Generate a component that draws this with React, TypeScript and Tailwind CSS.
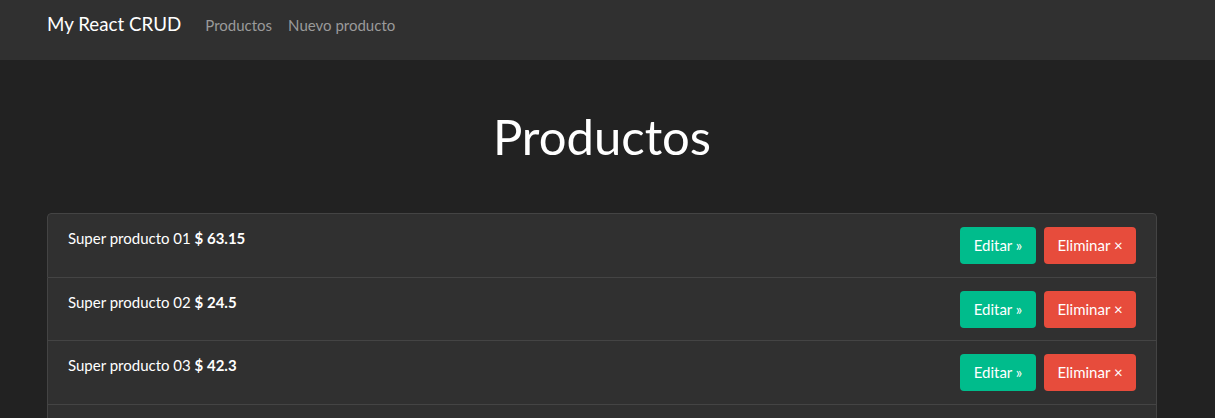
import React from "react";

const products = [
  { name: "Super producto 01", price: "63.15" },
  { name: "Super producto 02", price: "24.5" },
  { name: "Super producto 03", price: "42.3" },
  { name: "Super producto 04", price: "10" },
];

export default function App() {
  return (
    <div className="min-h-[418px] bg-[#222222] text-white font-['Lato','Open_Sans',sans-serif]">
      <nav className="h-[60px] bg-[#303030]">
        <div className="ml-[47px] flex items-baseline pt-[10px]">
          <span className="text-[18.75px] leading-[28px] text-white">My React CRUD</span>
          <a className="ml-[24px] text-[15px] leading-[22px] text-[#9a9a9a]">Productos</a>
          <a className="ml-[16px] text-[15px] leading-[22px] text-[#9a9a9a]">Nuevo producto</a>
        </div>
      </nav>
      <div className="ml-[47px] w-[1110px]">
        <h1 className="mt-[47px] text-center text-[49px] leading-[58px] font-normal text-white">Productos</h1>
        <ul className="mt-[48px] rounded-t-[4px] overflow-hidden">
          {products.map((p, i) => (
            <li
              key={i}
              className={`flex items-start justify-between bg-[#303030] border-x border-b border-[#444444] px-[20px] pt-[13px] pb-[12.5px] ${
                i === 0 ? "border-t rounded-t-[4px]" : ""
              }`}
            >
              <span className="text-[15px] leading-[22px] text-white">
                {p.name} <b className="font-bold">$ {p.price}</b>
              </span>
              <div className="flex gap-[8px]">
                <button className="h-[37px] w-[76px] rounded-[4px] bg-[#00bc8c] text-[15px] text-white">
                  Editar »
                </button>
                <button className="h-[37px] w-[92px] rounded-[4px] bg-[#e74c3c] text-[15px] text-white">
                  Eliminar ×
                </button>
              </div>
            </li>
          ))}
        </ul>
      </div>
    </div>
  );
}
